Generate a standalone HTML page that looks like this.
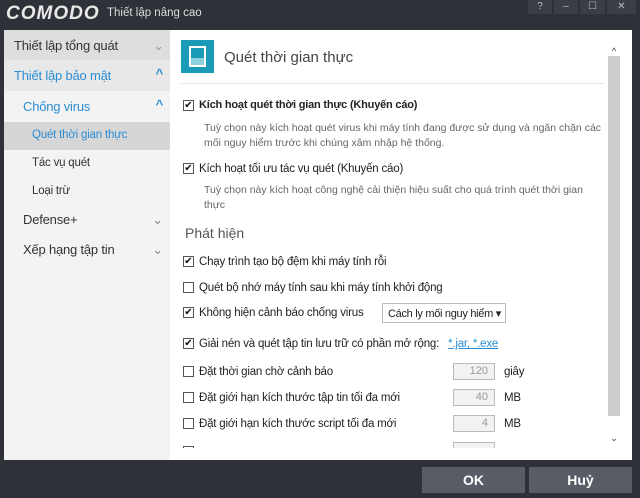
<!DOCTYPE html>
<html><head><meta charset="utf-8"><style>
*{margin:0;padding:0;box-sizing:border-box}
body{width:640px;height:498px;background:#2e3138;font-family:"Liberation Sans","DejaVu Sans",sans-serif;position:relative;overflow:hidden;font-size:12px;color:#222}
.abs{position:absolute}
.tb{top:0;height:14px;background:#3a3e46;color:#bbb;font-size:10px;text-align:center;line-height:13px}
.side{left:4px;top:30px;width:166px;height:430px;background:#f3f3f3}
.si{position:absolute;left:0;width:166px;font-size:13px;color:#333;letter-spacing:-0.2px}
.main{left:170px;top:30px;width:462px;height:430px;background:#fff;overflow:hidden}
.cb{position:absolute;width:11px;height:11px;border:1px solid #555;background:#fff;font-size:10px;line-height:9px;text-align:center;color:#111}
.lbl{position:absolute;font-size:11.5px;color:#222;white-space:nowrap;letter-spacing:-0.2px;margin-top:2px}
.desc{position:absolute;font-size:10.5px;color:#666;line-height:15px}
.inp{position:absolute;width:42px;height:17px;border:1px solid #bbb;background:#f2f2f2;color:#999;text-align:right;padding-right:6px;font-size:11px;line-height:15px}
.btn{top:467px;height:26px;background:#575c65;color:#fff;font-size:14px;text-align:center;line-height:26px;font-weight:bold}
</style></head><body>
<div class="abs" style="left:6px;top:3px;font-size:19px;font-weight:bold;font-style:italic;color:#e8e8e8;letter-spacing:1px">COMODO</div>
<div class="abs" style="left:107px;top:7px;font-size:11.5px;color:#ddd">Thiết lập nâng cao</div>
<div class="abs tb" style="left:528px;width:24px">?</div>
<div class="abs tb" style="left:554px;width:24px">–</div>
<div class="abs tb" style="left:580px;width:25px">☐</div>
<div class="abs tb" style="left:607px;width:29px">✕</div>

<div class="abs side">
<div class="si" style="top:0;height:30px;background:#dedede;padding:8px 10px">Thiết lập tổng quát<span style="position:absolute;right:6px;color:#999">⌄</span></div>
<div class="si" style="top:30px;height:31px;background:#e8e8e8;padding:8px 10px;color:#2a8dd4">Thiết lập bảo mật<span style="position:absolute;right:7px;top:6px;font-weight:bold">^</span></div>
<div class="si" style="top:61px;height:31px;padding:8px 19px;color:#2a8dd4">Chống virus<span style="position:absolute;right:7px;top:6px;font-weight:bold">^</span></div>
<div class="si" style="top:92px;height:28px;background:#d6d6d6;padding:7px 28px;font-size:11.5px;color:#2a8dd4">Quét thời gian thực</div>
<div class="si" style="top:127px;padding:0 28px;font-size:11.5px">Tác vụ quét</div>
<div class="si" style="top:155px;padding:0 28px;font-size:11.5px">Loại trừ</div>
<div class="si" style="top:182px;padding:0 19px">Defense+<span style="position:absolute;right:7px;color:#888">⌄</span></div>
<div class="si" style="top:212px;padding:0 19px">Xếp hạng tập tin<span style="position:absolute;right:7px;color:#888">⌄</span></div>
</div>

<div class="abs main">
<div class="abs" style="left:11px;top:10px;width:33px;height:33px;background:#1a9bb5">
<div class="abs" style="left:8px;top:6px;width:17px;height:21px;border:2px solid #fff"></div>
<div class="abs" style="left:10px;top:18px;width:13px;height:7px;background:#8fd0dd"></div></div>
<div class="abs" style="left:54px;top:19px;font-size:15px;color:#444">Quét thời gian thực</div>
<div class="abs" style="left:11px;top:53px;width:423px;height:1px;background:#e4e4e4"></div>
<div class="abs" style="left:438px;top:16px;width:12px;font-size:9px;color:#333;text-align:center">^</div>
<div class="abs" style="left:438px;top:26px;width:12px;height:360px;background:#cdcdcd"></div>
<div class="abs" style="left:438px;top:403px;width:12px;font-size:9px;color:#333;text-align:center">⌄</div>

<div class="cb" style="left:13px;top:70px">✔</div><div class="lbl" style="left:29px;top:67px;font-weight:bold;font-size:11px">Kích hoạt quét thời gian thực (Khuyến cáo)</div>
<div class="desc" style="left:34px;top:91px;width:402px">Tuỳ chọn này kích hoạt quét virus khi máy tính đang được sử dụng và ngăn chặn các mối nguy hiểm trước khi chúng xâm nhập hệ thống.</div>
<div class="cb" style="left:13px;top:133px">✔</div><div class="lbl" style="left:29px;top:131px">Kích hoạt tối ưu tác vụ quét (Khuyến cáo)</div>
<div class="desc" style="left:34px;top:153px;width:402px">Tuỳ chọn này kích hoạt công nghệ cải thiện hiệu suất cho quá trình quét thời gian thực</div>
<div class="abs" style="left:15px;top:195px;font-size:14px;color:#555">Phát hiện</div>
<div class="cb" style="left:13px;top:226px">✔</div><div class="lbl" style="left:29px;top:224px">Chạy trình tạo bộ đệm khi máy tính rỗi</div>
<div class="cb" style="left:13px;top:252px"></div><div class="lbl" style="left:29px;top:250px">Quét bộ nhớ máy tính sau khi máy tính khởi động</div>
<div class="cb" style="left:13px;top:277px">✔</div><div class="lbl" style="left:29px;top:275px">Không hiện cảnh báo chống virus</div>
<div class="abs" style="left:212px;top:273px;width:124px;height:20px;border:1px solid #bbb;font-size:11px;padding:3px 5px;color:#222;white-space:nowrap;letter-spacing:-0.3px">Cách ly mối nguy hiểm ▾</div>
<div class="cb" style="left:13px;top:308px">✔</div><div class="lbl" style="left:29px;top:306px">Giải nén và quét tập tin lưu trữ có phần mở rộng: <span style="color:#2a8dd4;text-decoration:underline;margin-left:6px">*.jar, *.exe</span></div>
<div class="cb" style="left:13px;top:336px"></div><div class="lbl" style="left:29px;top:334px">Đặt thời gian chờ cảnh báo</div><div class="inp" style="left:283px;top:333px">120</div><div class="lbl" style="left:334px;top:334px">giây</div>
<div class="cb" style="left:13px;top:362px"></div><div class="lbl" style="left:29px;top:360px">Đặt giới hạn kích thước tập tin tối đa mới</div><div class="inp" style="left:283px;top:359px">40</div><div class="lbl" style="left:334px;top:360px">MB</div>
<div class="cb" style="left:13px;top:388px"></div><div class="lbl" style="left:29px;top:386px">Đặt giới hạn kích thước script tối đa mới</div><div class="inp" style="left:283px;top:385px">4</div><div class="lbl" style="left:334px;top:386px">MB</div>
<div class="cb" style="left:13px;top:416px"></div><div class="inp" style="left:283px;top:412px"></div>
<div class="abs" style="left:0;top:418px;width:436px;height:12px;background:#fff"></div>
</div>
<div class="abs btn" style="left:422px;width:103px">OK</div>
<div class="abs btn" style="left:529px;width:103px">Huỷ</div>
</body></html>
